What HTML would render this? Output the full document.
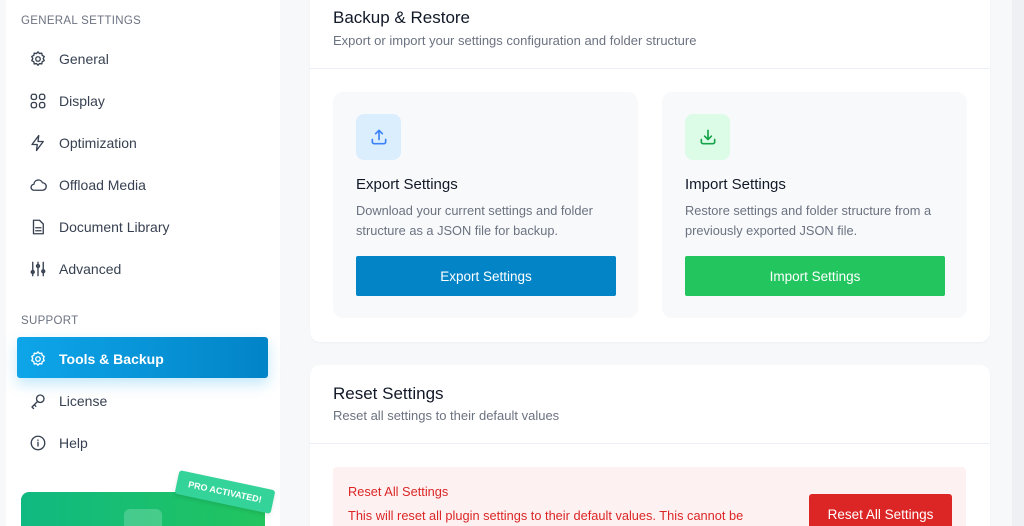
<!DOCTYPE html>
<html style="overflow:hidden;height:526px"><head><style>
*{box-sizing:border-box;margin:0;padding:0}
html,body{width:1024px;height:526px;overflow:hidden}
body{background:#f7f8fa;font-family:"Liberation Sans",sans-serif;position:relative;color:#1f2937}
.sb{position:absolute;left:6px;top:0;width:274px;height:526px;background:#fff}
.h{position:absolute;left:21px;font-size:11.5px;color:#6b7280;letter-spacing:.3px}
.it{position:absolute;left:29px;height:20px;display:flex;align-items:center;font-size:14px;color:#374151}
.it svg{width:18px;height:18px;margin-right:12px;stroke:#374151;fill:none;stroke-width:1.8;stroke-linecap:round;stroke-linejoin:round}
.act{position:absolute;left:17px;top:337px;width:251px;height:41px;border-radius:3px;background:linear-gradient(90deg,#0ea5e9,#0284c7);box-shadow:0 6px 14px rgba(14,165,233,.25)}
.card{position:absolute;left:310px;width:680px;background:#fff;border-radius:10px;box-shadow:0 1px 2px rgba(0,0,0,.04);overflow:hidden}
.t{position:absolute;left:23px;font-size:17px;color:#111827}
.s{position:absolute;left:23px;font-size:13px;color:#6b7280}
.div{position:absolute;left:0;right:0;height:1px;background:#eceff3}
.sub{position:absolute;top:92px;width:305px;height:226px;background:#f8f9fb;border-radius:10px}
.ic{position:absolute;left:23px;top:22px;width:45px;height:46px;border-radius:8px;display:flex;align-items:center;justify-content:center}
.st{position:absolute;left:23px;top:84px;font-size:15px;color:#111827}
.sd{position:absolute;left:23px;top:109px;font-size:12.8px;line-height:20px;color:#6b7280;width:275px}
.btn{position:absolute;left:23px;top:164px;width:260px;height:40px;border-radius:2px;color:#fff;font-size:13.5px;display:flex;align-items:center;justify-content:center}
</style></head><body>
<div class="sb"></div>
<div class="h" style="top:15px">GENERAL SETTINGS</div>
<div class="it" style="top:49px"><svg viewBox="0 0 24 24"><circle cx="12" cy="12" r="3"/><path d="M12 2.5l2 2.2 3-.5.6 3 2.7 1.4-1.3 2.8 1.3 2.8-2.7 1.4-.6 3-3-.5-2 2.2-2-2.2-3 .5-.6-3-2.7-1.4 1.3-2.8-1.3-2.8 2.7-1.4.6-3 3 .5z"/></svg>General</div>
<div class="it" style="top:91px"><svg viewBox="0 0 24 24"><rect x="3" y="3" width="7" height="7" rx="2.5"/><rect x="14" y="3" width="7" height="7" rx="2.5"/><rect x="3" y="14" width="7" height="7" rx="2.5"/><rect x="14" y="14" width="7" height="7" rx="2.5"/></svg>Display</div>
<div class="it" style="top:133px"><svg viewBox="0 0 24 24"><path d="M13 2L4 14h7l-1 8 9-12h-7z"/></svg>Optimization</div>
<div class="it" style="top:175px"><svg viewBox="0 0 24 24"><path d="M7 19a4 4 0 01-.5-8A6 6 0 0118 9a5 5 0 010 10z"/></svg>Offload Media</div>
<div class="it" style="top:217px"><svg viewBox="0 0 24 24"><path d="M6 3h8l5 5v13H6z"/><path d="M9 13h7M9 17h7"/></svg>Document Library</div>
<div class="it" style="top:259px"><svg viewBox="0 0 24 24"><path d="M5 3v18M12 3v18M19 3v18"/><circle cx="5" cy="16" r="2"/><circle cx="12" cy="8" r="2"/><circle cx="19" cy="15" r="2"/></svg>Advanced</div>
<div class="h" style="top:315px">SUPPORT</div>
<div class="act"></div>
<div class="it" style="top:349px;color:#fff;font-weight:bold"><svg viewBox="0 0 24 24" style="stroke:#fff"><circle cx="12" cy="12" r="3"/><path d="M12 2.5l2 2.2 3-.5.6 3 2.7 1.4-1.3 2.8 1.3 2.8-2.7 1.4-.6 3-3-.5-2 2.2-2-2.2-3 .5-.6-3-2.7-1.4 1.3-2.8-1.3-2.8 2.7-1.4.6-3 3 .5z"/></svg>Tools &amp; Backup</div>
<div class="it" style="top:391px"><svg viewBox="0 0 24 24"><circle cx="15" cy="9" r="5"/><path d="M11.5 12.5L4 20l2 2M7 17l2 2"/></svg>License</div>
<div class="it" style="top:433px"><svg viewBox="0 0 24 24"><circle cx="12" cy="12" r="9"/><path d="M12 11v5M12 8v.5"/></svg>Help</div>
<div style="position:absolute;left:21px;top:492px;width:244px;height:50px;border-radius:8px;background:linear-gradient(90deg,#10b981,#22c55e)"></div>
<div style="position:absolute;left:124px;top:509px;width:38px;height:30px;border-radius:6px;background:rgba(255,255,255,.2)"></div>
<div style="position:absolute;left:176px;top:480px;width:98px;height:24px;background:#34d399;border-radius:3px;transform:rotate(12deg);color:#fff;font-size:9px;font-weight:bold;display:flex;align-items:center;justify-content:center;box-shadow:0 2px 4px rgba(0,0,0,.1)">PRO ACTIVATED!</div>

<div style="position:absolute;left:1012px;top:0;width:12px;height:526px;background:#eef0f3"></div>

<div class="card" style="top:-10px;height:352px">
<div class="t" style="top:18px">Backup &amp; Restore</div>
<div class="s" style="top:43px">Export or import your settings configuration and folder structure</div>
<div class="div" style="top:78px"></div>
</div>
<div class="sub" style="left:333px">
<div class="ic" style="background:#dbeefe"><svg width="20" height="20" viewBox="0 0 24 24" fill="none" stroke="#3b82f6" stroke-width="2" stroke-linecap="round" stroke-linejoin="round"><path d="M12 15V4M8 8l4-4 4 4M4 15v3a2 2 0 002 2h12a2 2 0 002-2v-3"/></svg></div>
<div class="st">Export Settings</div>
<div class="sd">Download your current settings and folder structure as a JSON file for backup.</div>
<div class="btn" style="background:#0284c7">Export Settings</div>
</div>
<div class="sub" style="left:662px">
<div class="ic" style="background:#dcfce7"><svg width="20" height="20" viewBox="0 0 24 24" fill="none" stroke="#16a34a" stroke-width="2" stroke-linecap="round" stroke-linejoin="round"><path d="M12 4v11M8 11l4 4 4-4M4 15v3a2 2 0 002 2h12a2 2 0 002-2v-3"/></svg></div>
<div class="st">Import Settings</div>
<div class="sd">Restore settings and folder structure from a previously exported JSON file.</div>
<div class="btn" style="background:#22c55e">Import Settings</div>
</div>

<div class="card" style="top:365px;height:161px;border-radius:10px 10px 0 0">
<div class="t" style="top:19px">Reset Settings</div>
<div class="s" style="top:43px">Reset all settings to their default values</div>
<div class="div" style="top:78px"></div>
<div style="position:absolute;left:23px;top:102px;width:633px;height:100px;background:#fef1f1;border-radius:4px">
<div style="position:absolute;left:15px;top:17px;font-size:12.8px;color:#dc2626">Reset All Settings</div>
<div style="position:absolute;left:15px;top:41px;font-size:12.8px;color:#dc2626">This will reset all plugin settings to their default values. This cannot be</div>
<div style="position:absolute;left:476px;top:27px;width:143px;height:40px;background:#dc2626;border-radius:3px;color:#fff;font-size:13.5px;display:flex;align-items:center;justify-content:center">Reset All Settings</div>
</div>
</div>
</body></html>
